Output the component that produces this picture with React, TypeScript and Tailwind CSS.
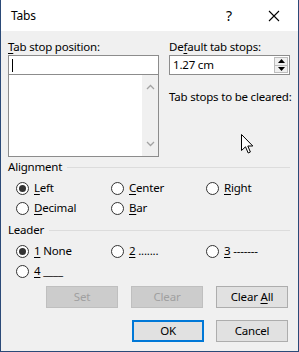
import React from "react";

const U = ({ children }: { children: React.ReactNode }) => <span className="underline underline-offset-2">{children}</span>;

function Radio({ checked, children }: { checked?: boolean; children: React.ReactNode }) {
  return (
    <div className="flex items-center h-[20px]">
      <div className="w-[13px] h-[13px] rounded-full border border-[#333333] bg-white flex items-center justify-center shrink-0">
        {checked && <div className="w-[7px] h-[7px] rounded-full bg-[#333333]" />}
      </div>
      <span className="ml-[5px] leading-[16px]">{children}</span>
    </div>
  );
}

function Group({ title, children }: { title: string; children: React.ReactNode }) {
  return (
    <div className="flex flex-col">
      <div className="flex items-center h-[16px]">
        <span className="leading-[16px]">{title}</span>
        <div className="flex-1 h-px bg-[#dcdcdc] ml-[5px]" />
      </div>
      {children}
    </div>
  );
}

function Btn({ children, disabled, def }: { children: React.ReactNode; disabled?: boolean; def?: boolean }) {
  const cls = disabled
    ? "bg-[#cccccc] border border-[#bfbfbf] text-[#a0a0a0]"
    : def
    ? "bg-[#e1e1e1] border-2 border-[#0078d7] text-black"
    : "bg-[#e1e1e1] border border-[#adadad] text-black";
  return (
    <div className={`w-[72px] h-[22px] flex items-center justify-center leading-[16px] ${cls}`}>
      <span>{children}</span>
    </div>
  );
}

export default function App() {
  return (
    <div
      className="relative w-[299px] h-[352px] bg-[#f0f0f0] border-x border-b border-[#2b4a78] flex flex-col text-[11.5px] tracking-[-0.2px] text-black"
      style={{ fontFamily: '"Noto Sans", "Open Sans", sans-serif' }}
    >
      <div className="h-[31px] bg-white flex items-center shrink-0">
        <span className="ml-[10px] text-[12px]">Tabs</span>
        <span className="ml-auto text-[14px] mr-[36px]">?</span>
        <svg width="12" height="12" viewBox="0 0 12 12" className="mr-[18px]">
          <path d="M1 1 L11 11 M11 1 L1 11" stroke="#000" strokeWidth="1.1" />
        </svg>
      </div>

      <div className="flex flex-col pl-[7px] pr-[8px] pt-[8px]">
        <div className="flex gap-[10px]">
          <div className="flex flex-col w-[151px]">
            <span className="leading-[16px]">
              <U>T</U>ab stop position:
            </span>
            <div className="h-[20px] bg-white border border-[#8c8c8c] flex items-center pl-[3px]">
              <div className="w-px h-[13px] bg-black" />
            </div>
            <div className="h-[82px] bg-white border border-t-0 border-[#8c8c8c] flex justify-end">
              <div className="w-[16px] bg-[#f0f0f0] flex flex-col items-center justify-between py-[9px]">
                <svg width="9" height="6" viewBox="0 0 9 6">
                  <path d="M1 5 L4.5 1.5 L8 5" stroke="#a3a3a3" strokeWidth="1.3" fill="none" />
                </svg>
                <svg width="9" height="6" viewBox="0 0 9 6">
                  <path d="M1 1 L4.5 4.5 L8 1" stroke="#a3a3a3" strokeWidth="1.3" fill="none" />
                </svg>
              </div>
            </div>
          </div>
          <div className="flex flex-col w-[121px]">
            <span className="leading-[16px]">
              De<U>f</U>ault tab stops:
            </span>
            <div className="h-[20px] bg-white border border-[#8c8c8c] flex items-center pl-[3px]">
              <span className="leading-[16px]">1.27 cm</span>
              <div className="ml-auto mr-px w-[14px] h-[16px] flex flex-col border border-[#bdbdbd]">
                <div className="flex-1 bg-[#efefef] flex items-center justify-center border-b border-[#bdbdbd]">
                  <svg width="7" height="4" viewBox="0 0 7 4"><path d="M0 4 L3.5 0 L7 4 Z" fill="#000" /></svg>
                </div>
                <div className="flex-1 bg-[#efefef] flex items-center justify-center">
                  <svg width="7" height="4" viewBox="0 0 7 4"><path d="M0 0 L3.5 4 L7 0 Z" fill="#000" /></svg>
                </div>
              </div>
            </div>
            <span className="leading-[16px] mt-[14px] whitespace-nowrap">Tab stops to be cleared:</span>
          </div>
        </div>

        <div className="mt-[2px]">
          <Group title="Alignment">
            <div className="grid grid-cols-[95px_95px_95px] pl-[8px] mt-[3px]">
              <Radio checked><U>L</U>eft</Radio>
              <Radio><U>C</U>enter</Radio>
              <Radio><U>R</U>ight</Radio>
              <Radio><U>D</U>ecimal</Radio>
              <Radio><U>B</U>ar</Radio>
            </div>
          </Group>
        </div>

        <div className="mt-[4px]">
          <Group title="Leader">
            <div className="grid grid-cols-[95px_95px_95px] pl-[8px] mt-[3px]">
              <Radio checked><U>1</U> None</Radio>
              <Radio><U>2</U> .......</Radio>
              <Radio><U>3</U> -------</Radio>
              <Radio><U>4</U> ____</Radio>
            </div>
          </Group>
        </div>

        <div className="flex justify-end gap-[13px] mt-[5px] pr-[2px]">
          <Btn disabled>Set</Btn>
          <Btn disabled>Clear</Btn>
          <Btn>Clear <U>A</U>ll</Btn>
        </div>
        <div className="flex justify-end gap-[12px] mt-[12px] pr-[2px]">
          <Btn def>OK</Btn>
          <Btn>Cancel</Btn>
        </div>
      </div>

      <svg width="13" height="20" viewBox="0 0 13 20" className="absolute left-[240px] top-[134px]">
        <path d="M0.5 0.5 L0.5 16.5 L4.5 12.8 L7.2 19 L9.4 18 L6.8 12 L11.8 12 Z" fill="#fff" stroke="#000" strokeWidth="1" strokeLinejoin="round" />
      </svg>
    </div>
  );
}
